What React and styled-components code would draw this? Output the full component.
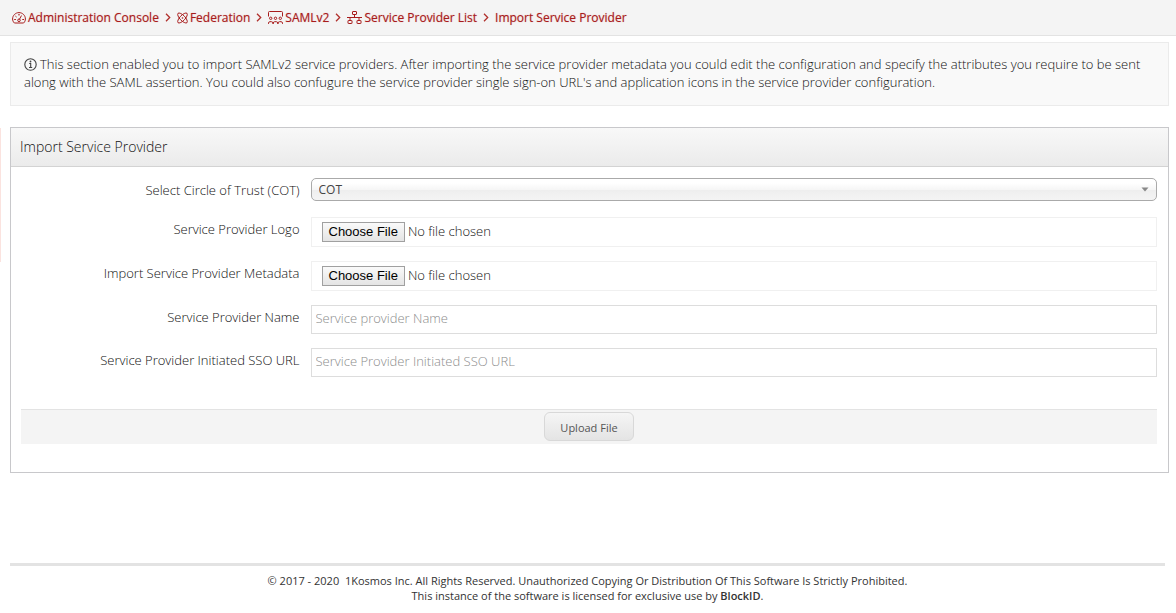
import React from "react";
import styled, { createGlobalStyle } from "styled-components";

const GlobalStyle = createGlobalStyle`
  *, *::before, *::after { box-sizing: border-box; }
  body {
    margin: 0;
    background: #fff;
    color: #111;
    font: 300 13px/18px "Open Sans", "Noto Sans", sans-serif;
  }
`;

const Breadcrumb = styled.nav`
  background: #f4f4f4;
  border-bottom: 1px solid #e3e3e3;
  padding: 0 12px;
`;

const Crumbs = styled.ol`
  display: flex;
  align-items: center;
  height: 35px;
  margin: 0;
  padding: 0;
  list-style: none;
`;

const Crumb = styled.li`
  display: flex;
  align-items: center;
`;

const CrumbLink = styled.a`
  display: flex;
  align-items: center;
  gap: 2px;
  color: #a81c1c;
  font-size: 12px;
  font-weight: 400;
  text-decoration: none;
  text-shadow: 0 0 1px #d89090;
  white-space: nowrap;
`;

const Icon = styled.svg`
  flex: none;
  fill: none;
  stroke: currentColor;
`;

const Separator = styled(Icon)`
  margin: 0 6px;
  color: #b0302c;
`;

const Page = styled.main`
  padding: 6px 7px 0 10px;
`;

const Notice = styled.p`
  margin: 0 0 21px;
  padding: 12px 13px;
  min-height: 64px;
  background: #f9f9f9;
  border: 1px solid #ebebeb;
`;

const NoticeIcon = styled(Icon)`
  margin-right: 3px;
  color: #444;
  vertical-align: -2px;
`;

const Panel = styled.section`
  position: relative;
  border: 1px solid #c8c8cb;
  padding-bottom: 28px;

  &::before {
    content: "";
    position: absolute;
    top: 0;
    left: -11px;
    width: 1px;
    height: 134px;
    background: #fbe3df;
  }
`;

const PanelTitle = styled.h1`
  margin: 0;
  padding: 0 9px;
  background: linear-gradient(#f8f8f8, #ebebeb);
  border-bottom: 1px solid #d3d3d3;
  color: #111;
  font-size: 14px;
  font-weight: 300;
  line-height: 38px;
`;

const Form = styled.form`
  padding: 9px 11px 0 0;
`;

const Field = styled.div`
  display: grid;
  grid-template-columns: calc(25% + 2px) 1fr;
  column-gap: 11px;
  align-items: ${(p) => (p.$centered ? "center" : "start")};
  min-height: 27px;
  margin-bottom: 14px;
`;

const Label = styled.label`
  padding: ${(p) => (p.$centered ? "0" : "2px 0")};
  line-height: 20px;
  text-align: right;
`;

const SelectWrap = styled.div`
  position: relative;
  color: #888;
`;

const Select = styled.select`
  display: block;
  width: 100%;
  height: 23px;
  padding: 0 7px;
  appearance: none;
  background: linear-gradient(#fff 20%, #f6f6f6 50%, #eee 52%, #f4f4f4 100%);
  border: 1px solid #aaa;
  border-radius: 5px;
  color: #444;
  font: inherit;
  font-size: 12px;
  font-weight: 400;
`;

const SelectArrow = styled.svg`
  position: absolute;
  top: 9px;
  right: 8px;
  pointer-events: none;
  fill: currentColor;
`;

const FileInput = styled.input`
  display: block;
  width: 100%;
  height: 30px;
  padding: 3px 10px;
  border: 1px solid #f0f0f0;
  color: #111;
  font: inherit;
  line-height: 20px;

  &::file-selector-button {
    height: 20px;
    margin: 0 3px 0 0;
    padding: 0 6px;
    background: linear-gradient(#fafafa, #e4e4e4);
    border: 1px solid #a0a0a0;
    border-radius: 0;
    color: #000;
    font: 13px/18px "Liberation Sans", Arial, sans-serif;
  }
`;

const TextInput = styled.input`
  display: block;
  width: 100%;
  height: 29px;
  padding: 0 4px 3px;
  background: #fff;
  border: 1px solid #ddd;
  color: #222;
  font: inherit;

  &::placeholder {
    color: #8c8c8c;
    opacity: 1;
  }
`;

const Actions = styled.div`
  display: flex;
  justify-content: center;
  margin: 32px 0 0 10px;
  padding: 2px 0 3px;
  background: #f4f4f4;
  border-top: 1px solid #e3e3e3;
`;

const UploadButton = styled.button`
  height: 29px;
  padding: 2px 15px 0;
  background: linear-gradient(#f5f5f5, #e4e4e4);
  border: 1px solid #d8d8d8;
  border-radius: 6px;
  color: #555;
  font: inherit;
  font-size: 11px;
  font-weight: 400;
`;

const Footer = styled.footer`
  margin: 90px 11px 0 10px;
  padding-top: 7px;
  border-top: 3px solid #e3e3e3;
  color: #333;
  font-size: 11px;
  font-weight: 400;
  line-height: 15px;
  text-align: center;
`;

const FooterLine = styled.p`
  margin: 0;
  white-space: pre-wrap;
`;

const Licensee = styled.b`
  font-weight: 600;
`;

const DashboardIcon = () => (
  <Icon width="14" height="12" viewBox="0 0 14 12" strokeWidth="1" aria-hidden="true">
    <path d="M2.400 11C1.300 10 .6 8.600.6 7 .6 3.400 3.500.6 7 .6s6.400 2.800 6.400 6.400c0 1.600-.7 3-1.800 4z" strokeLinejoin="round" />
    <circle cx="7" cy="8.300" r="1.300" />
    <path d="M7.600 7 9.300 3.900M6.500 2.800h1M3.700 4.300l.6.500M2.600 7.500h.9M10.700 7.500h.9" strokeLinecap="round" />
  </Icon>
);

const AtomIcon = () => (
  <Icon width="11" height="12" viewBox="0 0 11 12" strokeWidth="1" aria-hidden="true">
    <path d="M1 1.300c1-1 4.200.6 6.400 2.900s3.600 5.500 2.600 6.500-4.200-.6-6.400-2.900S0 2.300 1 1.300z" />
    <path d="M10 1.300c-1-1-4.200.6-6.400 2.900S0 9.700 1 10.700s4.200-.6 6.400-2.900S11 2.300 10 1.300z" />
    <circle cx="5.500" cy="6" r=".8" fill="currentColor" stroke="none" />
  </Icon>
);

const AudienceIcon = () => (
  <Icon width="15" height="13" viewBox="0 0 15 13" strokeWidth="1" aria-hidden="true">
    <path d="M.5 5.500v-4q0-1 1-1h12q1 0 1 1v4" />
    <circle cx="2.700" cy="7.300" r="1.200" />
    <circle cx="7.500" cy="7.300" r="1.200" />
    <circle cx="12.300" cy="7.300" r="1.200" />
    <path d="M.5 13v-.8q0-1.500 1.400-1.500h1.600q1.400 0 1.400 1.500v.8M5.300 13v-.8q0-1.500 1.400-1.500h1.600q1.400 0 1.400 1.500v.8M10.100 13v-.8q0-1.500 1.400-1.500h1.600q1.400 0 1.400 1.500v.8" />
  </Icon>
);

const NetworkIcon = () => (
  <Icon width="15" height="13" viewBox="0 0 15 13" strokeWidth="1" aria-hidden="true">
    <rect x="5.500" y=".5" width="4" height="3" rx=".4" />
    <path d="M7.500 3.500v3M0 6.500h15M3 6.500v3M12 6.500v3" />
    <rect x="1" y="9.500" width="4" height="3" rx=".4" />
    <rect x="10" y="9.500" width="4" height="3" rx=".4" />
  </Icon>
);

const InfoIcon = () => (
  <NoticeIcon width="13" height="13" viewBox="0 0 13 13" strokeWidth="1.100" aria-hidden="true">
    <circle cx="6.500" cy="6.500" r="5.700" />
    <path d="M5.200 5.500h1.500v4M5 9.500h3.200" />
    <circle cx="6.500" cy="3.500" r=".9" fill="currentColor" stroke="none" />
  </NoticeIcon>
);

const crumbs = [
  { text: "Administration Console", icon: DashboardIcon },
  { text: "Federation", icon: AtomIcon },
  { text: "SAMLv2", icon: AudienceIcon },
  { text: "Service Provider List", icon: NetworkIcon },
  { text: "Import Service Provider" },
];

export default function App() {
  return (
    <>
      <GlobalStyle />
      <Breadcrumb aria-label="Breadcrumb">
        <Crumbs>
          {crumbs.map(({ text, icon: CrumbIcon }, i) => (
            <Crumb key={text}>
              {i > 0 && (
                <Separator width="6" height="9" viewBox="0 0 6 9" strokeWidth="1.300" aria-hidden="true">
                  <path d="m1 .8 3.700 3.700L1 8.200" />
                </Separator>
              )}
              <CrumbLink href="#">
                {CrumbIcon && <CrumbIcon />}
                {text}
              </CrumbLink>
            </Crumb>
          ))}
        </Crumbs>
      </Breadcrumb>
      <Page>
        <Notice>
          <InfoIcon />
          This section enabled you to import SAMLv2 service providers. After importing the service
          provider metadata you could edit the configuration and specify the attributes you require
          to be sent along with the SAML assertion. You could also confugure the service provider
          single sign-on URL's and application icons in the service provider configuration.
        </Notice>
        <Panel>
          <PanelTitle>Import Service Provider</PanelTitle>
          <Form onSubmit={(e) => e.preventDefault()}>
            <Field $centered>
              <Label $centered htmlFor="cot">Select Circle of Trust (COT)</Label>
              <SelectWrap>
                <Select id="cot">
                  <option>COT</option>
                </Select>
                <SelectArrow width="8" height="5" viewBox="0 0 8 5" aria-hidden="true">
                  <path d="M.5.500h7L4 4.500z" />
                </SelectArrow>
              </SelectWrap>
            </Field>
            <Field>
              <Label htmlFor="logo">Service Provider Logo</Label>
              <FileInput id="logo" type="file" />
            </Field>
            <Field>
              <Label htmlFor="metadata">Import Service Provider Metadata</Label>
              <FileInput id="metadata" type="file" />
            </Field>
            <Field>
              <Label htmlFor="name">Service Provider Name</Label>
              <TextInput id="name" type="text" placeholder="Service provider Name" />
            </Field>
            <Field>
              <Label htmlFor="sso">Service Provider Initiated SSO URL</Label>
              <TextInput id="sso" type="text" placeholder="Service Provider Initiated SSO URL" />
            </Field>
            <Actions>
              <UploadButton type="submit">Upload File</UploadButton>
            </Actions>
          </Form>
        </Panel>
      </Page>
      <Footer>
        <FooterLine>
          {"© 2017 - 2020  1Kosmos Inc. All Rights Reserved. Unauthorized Copying Or Distribution Of This Software Is Strictly Prohibited."}
        </FooterLine>
        <FooterLine>
          This instance of the software is licensed for exclusive use by <Licensee>BlockID</Licensee>.
        </FooterLine>
      </Footer>
    </>
  );
}
